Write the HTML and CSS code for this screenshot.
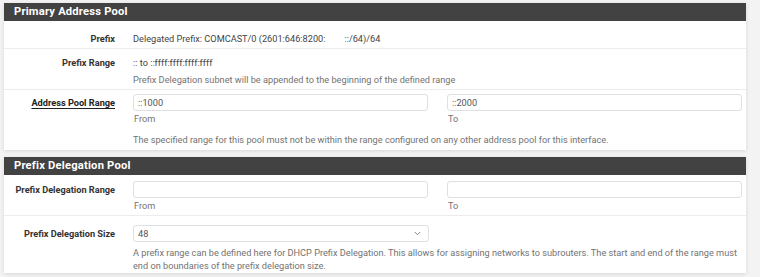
FILE: index.html
```html
<!DOCTYPE html>
<html lang="en">
<head>
    <meta charset="UTF-8">
    <title>DHCPv6 Server</title>
    <link rel="stylesheet" href="styles.css">
</head>
<body>

<div class="panel">
    <div class="panel-heading">Primary Address Pool</div>

    <div class="form-row first top-gap">
        <div class="form-label">Prefix</div>
        <div class="form-value">
            <div class="static-text">Delegated Prefix: COMCAST/0 (2601:646:8200:<span class="masked"></span>::/64)/64</div>
        </div>
    </div>

    <div class="form-row">
        <div class="form-label">Prefix Range</div>
        <div class="form-value">
            <div class="static-text">:: to ::ffff:ffff:ffff:ffff</div>
            <div class="help-text spaced">Prefix Delegation subnet will be appended to the beginning of the defined range</div>
        </div>
    </div>

    <div class="form-row inputs last">
        <div class="form-label"><span class="has-help">Address Pool Range</span></div>
        <div class="form-value">
            <div class="pair">
                <div>
                    <div class="text-input">::1000</div>
                    <div class="help-text under">From</div>
                </div>
                <div>
                    <div class="text-input">::2000</div>
                    <div class="help-text under">To</div>
                </div>
            </div>
            <div class="help-text note">The specified range for this pool must not be within the range configured on any other address pool for this interface.</div>
        </div>
    </div>
</div>

<div class="panel">
    <div class="panel-heading">Prefix Delegation Pool</div>

    <div class="form-row first inputs-top">
        <div class="form-label">Prefix Delegation Range</div>
        <div class="form-value">
            <div class="pair">
                <div>
                    <div class="text-input"></div>
                    <div class="help-text under">From</div>
                </div>
                <div>
                    <div class="text-input"></div>
                    <div class="help-text under">To</div>
                </div>
            </div>
        </div>
    </div>

    <div class="form-row select-row">
        <div class="form-label">Prefix Delegation Size</div>
        <div class="form-value">
            <div class="select-box">
                <span>48</span>
                <svg width="7" height="5" viewBox="0 0 7 5"><path d="M0.8 1 L3.5 3.8 L6.2 1" fill="none" stroke="#888" stroke-width="1"/></svg>
            </div>
            <div class="help-text long">A prefix range can be defined here for DHCP Prefix Delegation. This allows for assigning networks to subrouters. The start and end of the range must end on boundaries of the prefix delegation size.</div>
        </div>
    </div>
</div>

</body>
</html>
```

FILE: styles.css
```css
body {
    font-family: Roboto, "Liberation Sans", sans-serif;
    font-size: 9.2px;
    line-height: 13px;
    margin: 0;
    padding: 3px 14px 0 4px;
    background-color: #f3f3f3;
    color: #444;
}
.panel {
    background: #fff;
    margin-bottom: 7px;
    box-shadow: 0 1px 4px rgba(0, 0, 0, 0.12);
}
.panel-heading {
    background: #424242;
    color: #fff;
    font-size: 11.2px;
    font-weight: bold;
    letter-spacing: 0.2px;
    height: 18px;
    line-height: 18px;
    padding-left: 10px;
}
.form-row {
    display: grid;
    grid-template-columns: 111px 1fr;
    column-gap: 18px;
    padding: 5px 4px 3px 0;
    border-top: 1px solid #ececec;
}
.form-row.first {
    border-top: none;
}
.form-row.top-gap {
    padding-top: 9px;
}
.form-row.inputs {
    padding-top: 4px;
}
.form-row.last {
    padding-bottom: 4px;
}
.form-row.inputs-top {
    padding-top: 6px;
    padding-bottom: 3px;
}
.form-row.select-row {
    padding-top: 9px;
    padding-bottom: 1px;
}
.form-label {
    text-align: right;
    font-weight: bold;
    color: #333;
    padding-top: 2px;
}
.has-help {
    color: #222;
    text-decoration: underline;
    text-underline-offset: 2px;
}
.static-text {
    padding-top: 2px;
    color: #444;
}
.masked {
    display: inline-block;
    width: 19px;
}
.help-text {
    color: #737373;
}
.help-text.spaced {
    margin-top: 4px;
}
.help-text.under {
    margin-top: 1px;
    padding-left: 1px;
}
.help-text.note {
    margin-top: 8px;
}
.help-text.long {
    margin-top: 4px;
}
.pair {
    display: grid;
    grid-template-columns: 1fr 1fr;
    column-gap: 19px;
}
.text-input {
    height: 15px;
    border: 1px solid #e0e0e0;
    border-radius: 3px;
    padding-left: 4px;
    line-height: 15px;
    color: #555;
}
.select-box {
    width: 283px;
    height: 15px;
    border: 1px solid #e0e0e0;
    border-radius: 3px;
    padding: 0 7px 0 4px;
    line-height: 15px;
    color: #555;
    display: flex;
    justify-content: space-between;
    align-items: center;
}
```
